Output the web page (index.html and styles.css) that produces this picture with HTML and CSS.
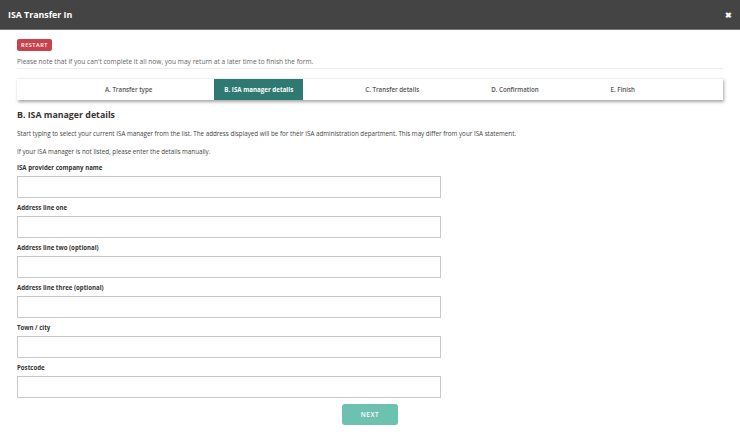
FILE: index.html
```html
<!DOCTYPE html>
<html lang="en">
    <head>
        <meta charset="UTF-8">
        <meta name="viewport" content="width=device-width, initial-scale=1.0">
        <title>ISA Transfer In</title>
        <link rel="stylesheet" href="styles.css">
    </head>
    <body>
        <!-- Cabecera del modal -->
        <header class="modal-header">
            <h1>ISA Transfer In</h1>
            <span class="close">&#10006;</span>
        </header>

        <main class="modal-body">
            <button class="restart">RESTART</button>
            <p class="note">Please note that if you can't complete it all now, you may return at a later time to finish the form.</p>

            <!-- Pasos del formulario -->
            <nav class="steps">
                <span class="step">A. Transfer type</span>
                <span class="step active">B. ISA manager details</span>
                <span class="step">C. Transfer details</span>
                <span class="step">D. Confirmation</span>
                <span class="step">E. Finish</span>
            </nav>

            <h2>B. ISA manager details</h2>
            <p class="info">Start typing to select your current ISA manager from the list. The address displayed will be for their ISA administration department. This may differ from your ISA statement.</p>
            <p class="info">If your ISA manager is not listed, please enter the details manually.</p>

            <form class="form">
                <label>ISA provider company name</label>
                <input type="text">
                <label>Address line one</label>
                <input type="text">
                <label>Address line two (optional)</label>
                <input type="text">
                <label>Address line three (optional)</label>
                <input type="text">
                <label>Town / city</label>
                <input type="text">
                <label>Postcode</label>
                <input type="text">
            </form>

            <div class="actions">
                <button class="next">NEXT</button>
            </div>
        </main>
    </body>
</html>
```

FILE: styles.css
```css
body {
    margin: 0;
    font-family: "Open Sans", sans-serif;
    background-color: #fff;
    color: #333;
}
.modal-header {
    height: 30px;
    background-color: #444;
    border-bottom: 1px solid #777;
    display: flex;
    align-items: center;
    justify-content: space-between;
    padding: 0 8px;
    box-sizing: border-box;
}
.modal-header h1 {
    margin: 0;
    font-size: 8.8px;
    font-weight: 700;
    color: #fff;
}
.close {
    color: #fff;
    font-size: 8px;
    font-weight: bold;
}
.modal-body {
    padding: 9px 17px 0;
}
.restart {
    display: block;
    background-color: #c8424c;
    color: #fff;
    border: none;
    border-radius: 2px;
    font-family: "Open Sans", sans-serif;
    font-size: 5.6px;
    font-weight: 600;
    letter-spacing: 0.5px;
    padding: 0;
    width: 35px;
    height: 12px;
}
.note {
    margin: 6px 0 0;
    font-size: 6.6px;
    line-height: 9px;
    color: #666;
    padding-bottom: 2px;
    border-bottom: 1px solid #eee;
}
.steps {
    margin-top: 9px;
    height: 22px;
    display: flex;
    justify-content: space-evenly;
    padding: 0 26px;
    box-shadow: 1px 2px 3px rgba(0,0,0,0.35);
    border-top: 1px solid #f0f0f0;
    box-sizing: border-box;
}
.step {
    display: flex;
    align-items: center;
    padding: 0 10px;
    font-size: 6.2px;
    font-weight: 600;
    color: #555;
}
.step.active {
    background-color: #2e7a73;
    color: #fff;
    font-weight: 700;
}
h2 {
    margin: 9px 0 0;
    font-size: 8.8px;
    font-weight: 700;
    color: #333;
}
.info {
    font-size: 6.25px;
    line-height: 9px;
    color: #444;
    margin: 8px 0 0;
}
.info + .info {
    margin-top: 9px;
}
.form {
    display: flex;
    flex-direction: column;
    width: 424px;
    margin-top: 7px;
}
.form label {
    font-size: 6.1px;
    font-weight: 700;
    color: #333;
    line-height: 10px;
    margin-bottom: 3px;
}
.form input {
    height: 22px;
    box-sizing: border-box;
    border: 1px solid #c8c8c8;
    margin: 0 0 5px;
    padding: 0 6px;
}
.actions {
    display: flex;
    justify-content: center;
    width: 706px;
    margin-top: 1px;
}
.next {
    width: 56px;
    height: 21px;
    background-color: #6cc1b1;
    color: #fff;
    border: none;
    border-radius: 3px;
    font-family: "Open Sans", sans-serif;
    font-size: 6.4px;
    font-weight: 600;
    letter-spacing: 0.6px;
}
```
